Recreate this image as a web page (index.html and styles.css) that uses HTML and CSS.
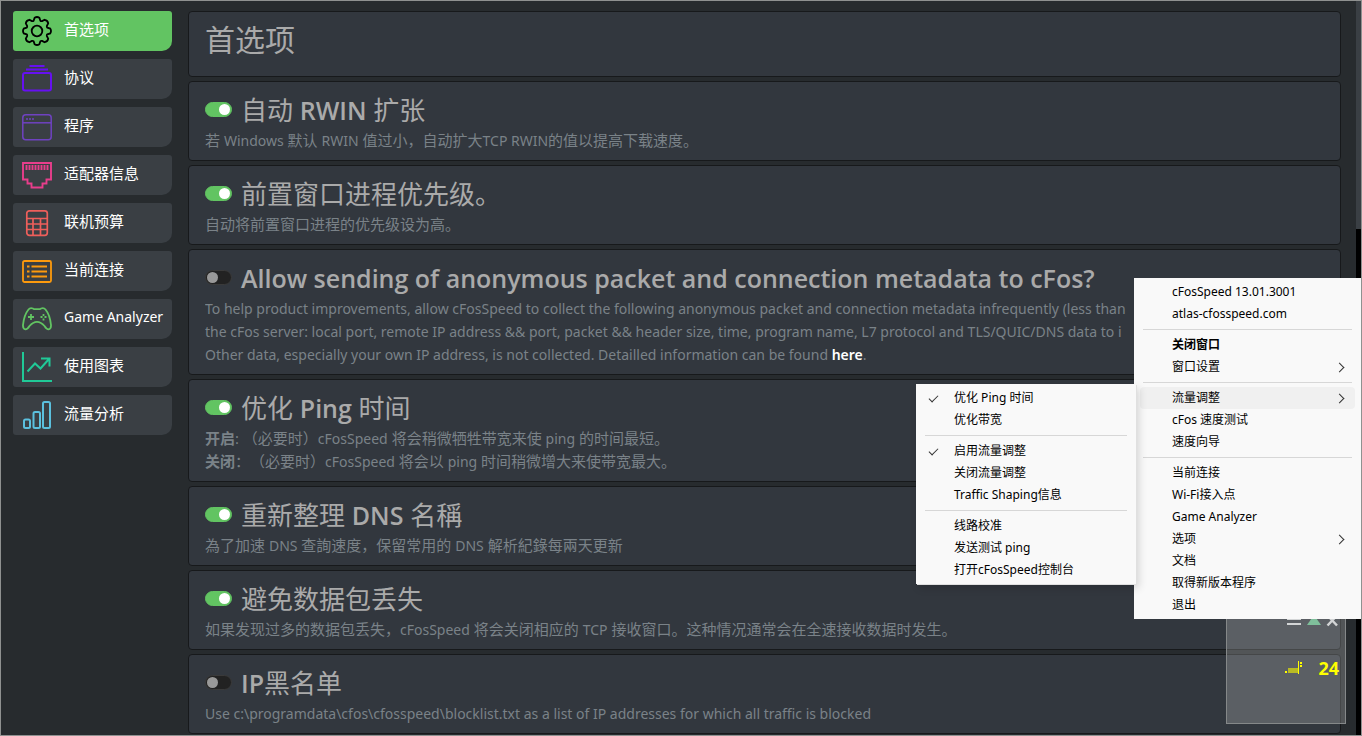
FILE: index.html
```html
<!DOCTYPE html>
<html lang="zh-CN">
<head>
<meta charset="UTF-8">
<meta name="viewport" content="width=device-width, initial-scale=1.0">
<title>cFosSpeed</title>
<link rel="stylesheet" href="styles.css">
</head>
<body>

<div class="window">
  <nav class="sidebar">
    <a class="nav-item active" href="#">
      <svg class="icon gear" viewBox="0 0 30 30"><circle cx="15" cy="15" r="5.3"/><path d="M12.6 1.8Q15 .2 17.4 1.8L18.3 4.6Q19 5.4 20.1 5.1L22.7 3.8Q25.7 4.3 26.2 7.3L24.9 9.9Q24.6 11 25.4 11.7L28.2 12.6Q29.8 15 28.2 17.4L25.4 18.3Q24.6 19 24.9 20.1L26.2 22.7Q25.7 25.7 22.7 26.2L20.1 24.9Q19 24.6 18.3 25.4L17.4 28.2Q15 29.8 12.6 28.2L11.7 25.4Q11 24.6 9.9 24.9L7.3 26.2Q4.3 25.7 3.8 22.7L5.1 20.1Q5.4 19 4.6 18.3L1.8 17.4Q.2 15 1.8 12.6L4.6 11.7Q5.4 11 5.1 9.9L3.8 7.3Q4.3 4.3 7.3 3.8L9.9 5.1Q11 5.4 11.7 4.6Z"/></svg>
      <span>首选项</span>
    </a>
    <a class="nav-item" href="#">
      <svg class="icon protocol" viewBox="0 0 30 30"><path d="M7.5 2h15M4 5.5h22"/><rect x="1" y="9" width="28" height="17.5" rx="2"/></svg>
      <span>协议</span>
    </a>
    <a class="nav-item" href="#">
      <svg class="icon program" viewBox="0 0 30 30"><rect x=".8" y="2.8" width="28.4" height="25" rx="3"/><path d="M1 10.8h28"/><path d="M4 7h2M7 7h2M10 7h2"/></svg>
      <span>程序</span>
    </a>
    <a class="nav-item" href="#">
      <svg class="icon adapter" viewBox="0 0 30 30"><path d="M1 3h28v16.500h-4.500v4h-4v4h-11v-4h-4v-4H1z"/><path d="M4.500 5v5M7.500 5v5M10.500 5v5M13.500 5v5M16.500 5v5M19.500 5v5M22.500 5v5M25.500 5v5"/></svg>
      <span>适配器信息</span>
    </a>
    <a class="nav-item" href="#">
      <svg class="icon budget" viewBox="0 0 30 30"><rect x="4.8" y="2.8" width="20.5" height="24.500" rx="2.5"/><path d="M5 10.5h20.500M5 16h20.500M5 21.500h20.500M11 10.500v17M18.500 10.500v17"/></svg>
      <span>联机预算</span>
    </a>
    <a class="nav-item" href="#">
      <svg class="icon connection" viewBox="0 0 30 30"><rect x="1" y="5" width="28" height="21" rx="1.500"/><path d="M5 10.500h2.500M5 15.500h2.500M5 20.500h2.500M9.500 10.500h15.500M9.500 15.500h15.500M9.500 20.500h15.500"/></svg>
      <span>当前连接</span>
    </a>
    <a class="nav-item" href="#">
      <svg class="icon game" viewBox="0 0 30 30"><path d="M6.500 5.500Q8 3.600 11 4.500L12 5.200H18L19 4.500Q22 3.600 23.500 5.500Q28 11 29 21Q29.200 25 26.500 25.300Q24.500 25.300 22.500 22Q19 17.800 15 17.800Q11 17.800 7.500 22Q5.500 25.300 3.500 25.300Q.8 25 1 21Q2 11 6.500 5.500Z"/><path d="M9 10v6M6 13h6M18.500 13h2M22.500 13h2M21.500 10v2M21.500 14.500v2"/></svg>
      <span class="latin">Game Analyzer</span>
    </a>
    <a class="nav-item" href="#">
      <svg class="icon chart" viewBox="0 0 30 30"><path d="M1 0v29h29"/><path d="M5.500 19.500L13 11.500L18.500 16.500L27 7M19 6.500h8.500v8"/></svg>
      <span>使用图表</span>
    </a>
    <a class="nav-item" href="#">
      <svg class="icon analysis" viewBox="0 0 30 30"><rect x="2" y="19.500" width="6" height="8.500" rx="1.500"/><rect x="11.500" y="12" width="6.500" height="16" rx="1.500"/><rect x="21" y="2" width="7" height="26" rx="1.500"/></svg>
      <span>流量分析</span>
    </a>
  </nav>

  <main class="content">
    <section class="card card-title">
      <h1>首选项</h1>
    </section>
    <section class="card">
      <h2><input type="checkbox" id="rwin" checked><label for="rwin">自动 <b>RWIN</b> 扩张</label></h2>
      <p>若 <span>Windows</span> 默认 <span>RWIN</span> 值过小，自动扩大<span>TCP RWIN</span>的值以提高下载速度。</p>
    </section>
    <section class="card">
      <h2><input type="checkbox" id="priority" checked><label for="priority">前置窗口进程优先级。</label></h2>
      <p>自动将前置窗口进程的优先级设为高。</p>
    </section>
    <section class="card">
      <h2><input type="checkbox" id="metadata"><label for="metadata"><b>Allow sending of anonymous packet and connection metadata to cFos?</b></label></h2>
      <p><span>To help product improvements, allow cFosSpeed to collect the following anonymous packet and connection metadata infrequently (less than<br>the cFos server: local port, remote IP address &amp;&amp; port, packet &amp;&amp; header size, time, program name, L7 protocol and TLS/QUIC/DNS data to i<br>Other data, especially your own IP address, is not collected. Detailled information can be found <a href="#">here</a>.</span></p>
    </section>
    <section class="card">
      <h2><input type="checkbox" id="ping" checked><label for="ping">优化 <b>Ping</b> 时间</label></h2>
      <p><strong>开启</strong>: （必要时）<span>cFosSpeed</span> 将会稍微牺牲带宽来使 <span>ping</span> 的时间最短。<br><strong>关闭</strong>：（必要时）<span>cFosSpeed</span> 将会以 <span>ping</span> 时间稍微增大来使带宽最大。</p>
    </section>
    <section class="card">
      <h2><input type="checkbox" id="dns" checked><label for="dns">重新整理 <b>DNS</b> 名稱</label></h2>
      <p>為了加速 <span>DNS</span> 查詢速度，保留常用的 <span>DNS</span> 解析紀錄每兩天更新</p>
    </section>
    <section class="card">
      <h2><input type="checkbox" id="loss" checked><label for="loss">避免数据包丢失</label></h2>
      <p>如果发现过多的数据包丢失，<span>cFosSpeed</span> 将会关闭相应的 <span>TCP</span> 接收窗口。这种情况通常会在全速接收数据时发生。</p>
    </section>
    <section class="card">
      <h2><input type="checkbox" id="blocklist"><label for="blocklist"><b>IP</b>黑名单</label></h2>
      <p><span>Use c:\programdata\cfos\cfosspeed\blocklist.txt as a list of IP addresses for which all traffic is blocked</span></p>
    </section>
  </main>
  <div class="scrollbar"><div class="thumb"></div></div>
</div>

<!-- Speed monitor -->
<div class="monitor">
  <svg class="monitor-tools" viewBox="0 0 56 14"><path class="bars" d="M4 5h14M4 10h14"/><path class="up" d="M24 11L31 1L38 11Z"/><path class="close" d="M44.500 1.500L54 11.500M54 1.500L44.500 11.500"/></svg>
  <div class="monitor-value">
    <svg viewBox="0 0 18 14"><path class="area" d="M3 7h11v5H3z"/><path class="dots" d="M0 10h2v2H0zM13 0h1v13H13zM15 1h2v2H15zM15 4h2v2H15z"/></svg>
    <b>24</b>
  </div>
</div>

<!-- Context menu -->
<div class="menu menu-main">
  <button>cFosSpeed 13.01.3001</button>
  <button>atlas-cfosspeed.com</button>
  <hr>
  <button class="default">关闭窗口</button>
  <button class="more">窗口设置</button>
  <hr>
  <button class="more hover">流量调整</button>
  <button>cFos 速度测试</button>
  <button>速度向导</button>
  <hr>
  <button>当前连接</button>
  <button>Wi-Fi接入点</button>
  <button>Game Analyzer</button>
  <button class="more">选项</button>
  <button>文档</button>
  <button>取得新版本程序</button>
  <button>退出</button>
</div>

<div class="menu menu-sub">
  <button class="checked">优化 Ping 时间</button>
  <button>优化带宽</button>
  <hr>
  <button class="checked">启用流量调整</button>
  <button>关闭流量调整</button>
  <button>Traffic Shaping信息</button>
  <hr>
  <button>线路校准</button>
  <button>发送测试 ping</button>
  <button>打开cFosSpeed控制台</button>
</div>

</body>
</html>
```
FILE: styles.css
```css
* {
  box-sizing: border-box;
}
body {
  margin: 0;
  background-color: #272b2e;
  font-family: "Open Sans", "Noto Sans CJK SC", sans-serif;
  font-size: 15px;
  color: #aaa;
  text-spacing-trim: space-all;
}
.window {
  display: flex;
  height: 100vh;
  overflow: hidden;
  border: 1px solid #8f9190;
}

/* Sidebar */
.sidebar {
  display: flex;
  flex-direction: column;
  gap: 8px;
  width: 159px;
  margin: 10px 16px 0 12px;
  flex-shrink: 0;
}
.nav-item {
  display: flex;
  align-items: center;
  gap: 12px;
  height: 40px;
  padding-left: 9px;
  background-color: #3a3f44;
  border-radius: 3px 3px 10px 3px;
  color: #fff;
  text-decoration: none;
  white-space: nowrap;
}
.nav-item span {
  padding-bottom: 5px;
}
.nav-item .latin {
  font-family: "Noto Sans", sans-serif;
  font-size: 14px;
}
.nav-item.active {
  background-color: #62c462;
}
.icon {
  width: 30px;
  height: 30px;
  fill: none;
  stroke-width: 1.5;
  flex-shrink: 0;
}
.gear { stroke: #000; stroke-width: 1.8; }
.protocol { stroke: #6610f2; stroke-width: 2; }
.program { stroke: #6f42c1; }
.adapter { stroke: #e83e8c; stroke-width: 1.9; }
.budget { stroke: #ee5f5b; stroke-width: 1.7; }
.connection { stroke: #fd9a0d; stroke-width: 1.8; }
.game { stroke: #62c462; stroke-width: 1.8; }
.chart { stroke: #20c997; stroke-width: 2; }
.analysis { stroke: #5bc0de; stroke-width: 2; }

/* Preference cards */
.content {
  display: flex;
  flex-direction: column;
  gap: 4px;
  flex: 1;
  min-width: 0;
  padding-top: 10px;
}
.card {
  flex-shrink: 0;
  padding: 10px 16px 8px;
  background-color: #32373e;
  border: 1px solid #17191b;
  border-radius: 4px;
}
.card-title {
  padding-bottom: 18px;
}
h1 {
  margin: 0;
  font-size: 30px;
  line-height: 36px;
  font-weight: 400;
}
h2 {
  display: flex;
  align-items: center;
  gap: 9px;
  margin: 0 0 1px;
  font-size: 26px;
  line-height: 36px;
  font-weight: 400;
}
h2 b {
  font-size: 25px;
  font-weight: 600;
}
.card p {
  margin: 0;
  line-height: 23px;
  color: #7a8288;
  white-space: nowrap;
  overflow: hidden;
}
.card p span {
  font-family: "Noto Sans", sans-serif;
  font-size: 14px;
}
.card a {
  color: #fff;
  font-weight: 600;
  text-decoration: none;
}
input[type="checkbox"] {
  appearance: none;
  width: 27px;
  height: 15px;
  margin: 0 0 2px;
  padding: 1px;
  border: 1px solid #3a3a3a;
  border-radius: 8px;
  background-color: #222;
}
input[type="checkbox"]::before {
  content: "";
  display: block;
  width: 11px;
  height: 11px;
  border-radius: 50%;
  background-color: #999;
}
input[type="checkbox"]:checked {
  background-color: #62c462;
  border-color: #62c462;
}
input[type="checkbox"]:checked::before {
  margin-left: auto;
  background-color: #fff;
}

.scrollbar {
  width: 5px;
  margin-left: 15px;
  background-color: #000;
}
.thumb {
  height: 31%;
  background-color: #3a3f44;
}

/* Speed monitor */
.monitor {
  position: absolute;
  right: 16px;
  bottom: 12px;
  width: 120px;
  height: 120px;
  padding: 9px 6px;
  background-color: rgba(255, 255, 255, 0.2);
  border: 1px solid #858889;
}
.monitor-tools {
  display: block;
  width: 56px;
  height: 14px;
  margin-left: auto;
}
.bars { stroke: #d3d5d6; stroke-width: 2; }
.up { fill: #7fbf9b; }
.close { stroke: #d3d5d6; stroke-width: 2.5; }
.monitor-value {
  display: flex;
  align-items: center;
  justify-content: flex-end;
  gap: 15px;
  margin-top: 28px;
  font-family: "Noto Sans", sans-serif;
  font-size: 18px;
  line-height: 24px;
  color: #ff0;
}
.monitor-value svg {
  width: 18px;
  height: 14px;
}
.area { fill: #b9ba24; }
.dots { fill: #ff0; }

/* Menus */
.menu {
  position: absolute;
  padding: 3px 6px;
  background-color: #f9f9f9;
  font-size: 12px;
}
.menu-main {
  top: 278px;
  right: 1px;
  width: 227px;
}
.menu-sub {
  top: 384px;
  right: 226px;
  width: 220px;
  box-shadow: 1px 1px 0 #e0e0e0, 3px 4px 8px rgba(0, 0, 0, 0.15);
}
.menu button {
  position: relative;
  display: block;
  width: 100%;
  height: 22px;
  padding: 0 32px;
  border: 0;
  border-radius: 4px;
  background: none;
  font-family: "Noto Sans", "Noto Sans CJK SC", sans-serif;
  font-size: 12px;
  line-height: 22px;
  text-align: left;
  white-space: nowrap;
  color: #000;
}
.menu hr {
  height: 1px;
  margin: 4px 3px;
  border: 0;
  background-color: #d7d7d7;
}
.menu .default {
  font-weight: 700;
}
.menu .hover {
  background-color: #f0f0f0;
}
.menu .more::after {
  content: "";
  position: absolute;
  top: 8px;
  right: 12px;
  width: 6px;
  height: 6px;
  border: solid #333;
  border-width: 1px 1px 0 0;
  transform: rotate(45deg);
}
.menu .checked::before {
  content: "";
  position: absolute;
  top: 8px;
  left: 7px;
  width: 8px;
  height: 4px;
  border: solid #333;
  border-width: 0 0 1px 1px;
  transform: rotate(-45deg);
}
```
